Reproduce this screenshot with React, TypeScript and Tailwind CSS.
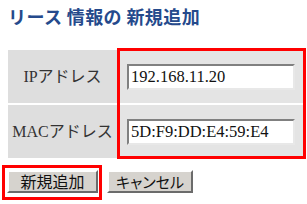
export default function App() {
  const rows = [
    { label: "IPアドレス", value: "192.168.11.20" },
    { label: "MACアドレス", value: "5D:F9:DD:E4:59:E4" },
  ];

  return (
    <div className="w-[307px] h-[204px] bg-white overflow-hidden relative font-['Liberation_Serif','Noto_Sans_CJK_JP',serif]">
      {/* Title */}
      <h1 className="pl-[8px] pt-[5px] h-[50px] text-[18px] leading-[22px] font-bold text-[#254a8c] font-['Noto_Sans_CJK_JP',sans-serif] tracking-[0.4px]">
        リース 情報の 新規追加
      </h1>

      {/* Form table */}
      <div className="relative ml-[8px] w-[296px]">
        <div className="grid grid-cols-[109px_1fr] gap-y-[2px] gap-x-[1px] bg-white">
          {rows.map((r) => (
            <div key={r.label} className="contents">
              <div className="h-[53px] bg-[#dedede] flex items-center justify-center text-[16px] text-[#333] font-['Liberation_Serif','Noto_Sans_CJK_JP',serif]">
                {r.label}
              </div>
              <div className="h-[53px] bg-[#e4e4e4] flex items-center pl-[9px]">
                <input
                  readOnly
                  value={r.value}
                  className="w-[168px] h-[26px] bg-white border-2 border-t-[#808080] border-l-[#808080] border-b-[#e8e8e8] border-r-[#e8e8e8] pl-[2px] text-[16.5px] text-[#111] font-['Liberation_Serif',serif] outline-none"
                />
              </div>
            </div>
          ))}
        </div>
        {/* red highlight around value column */}
        <div className="absolute left-[109px] -top-[2px] w-[189px] h-[111px] border-[3px] border-[#ff0000] pointer-events-none" />
      </div>

      {/* Buttons */}
      <div className="relative flex gap-[9px] pl-[7px] pt-[12px]">
        <button className="w-[91px] h-[23px] bg-[#d6d3ce] border-2 border-t-white border-l-white border-b-[#6b6b6b] border-r-[#6b6b6b] text-[16px] leading-[19px] text-[#111] font-['Noto_Sans_CJK_JP',sans-serif]">
          新規追加
        </button>
        <button className="w-[86px] h-[23px] bg-[#d6d3ce] border-2 border-t-white border-l-white border-b-[#6b6b6b] border-r-[#6b6b6b] text-[15px] leading-[19px] text-[#111] font-['Noto_Sans_CJK_JP',sans-serif] [font-feature-settings:'palt']">
          キャンセル
        </button>
        <div className="absolute left-[2px] top-[7px] w-[100px] h-[35px] border-[3px] border-[#ff0000] pointer-events-none" />
      </div>
    </div>
  );
}
